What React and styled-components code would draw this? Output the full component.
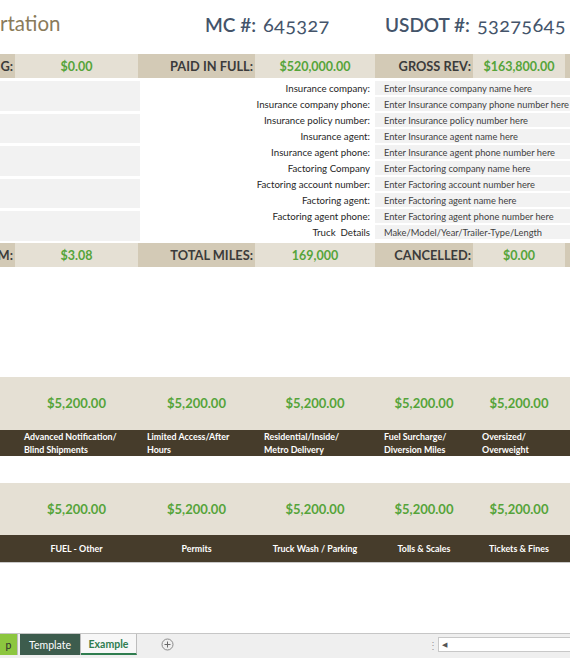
import React from 'react';
import styled, { createGlobalStyle } from 'styled-components';

const GlobalStyle = createGlobalStyle`
  html, body { margin: 0; padding: 0; background: #fff; }
  body { font-family: Lato, "Liberation Sans", sans-serif; }
`;

const COLS = '15px 123px 117px 120px 98px 92px 5px';

const Page = styled.div`
  width: 570px;
  height: 658px;
  overflow: hidden;
  display: flex;
  flex-direction: column;
`;

const Header = styled.div`
  height: 54px;
  display: grid;
  grid-template-columns: 205px 180px 1fr;
  align-items: center;
`;

const Title = styled.span`
  font-size: 20.5px;
  color: #8a7b5a;
  padding-bottom: 8px;
`;

const Ident = styled.span`
  display: flex;
  align-items: baseline;
  gap: 7px;
  color: #44546a;
  font-size: 19px;
  padding-bottom: 6px;
`;

const IdentLabel = styled.span`
  font-weight: 600;
`;

const IdentNum = styled.span`
  font-size: 20px;
  font-feature-settings: "onum";
  letter-spacing: 0.3px;
`;

const SumRow = styled.div`
  height: 24px;
  display: grid;
  grid-template-columns: ${COLS};
`;

const SumLabel = styled.div`
  background: #d3cab6;
  color: #3b3b3b;
  font-weight: 700;
  font-size: 12.8px;
  display: flex;
  align-items: center;
  justify-content: flex-end;
  padding-right: 2px;
  white-space: nowrap;
  overflow: hidden;
`;

const SumValue = styled.div`
  background: #e5e0d4;
  color: #55a43a;
  font-weight: 700;
  font-size: 12.5px;
  display: flex;
  align-items: center;
  justify-content: center;
`;

const Info = styled.div`
  height: 165px;
  display: grid;
  grid-template-columns: 140px 1fr;
`;

const LeftBoxes = styled.div`
  display: flex;
  flex-direction: column;
  gap: 3px;
  padding: 3px 0 2px;
`;

const GrayBox = styled.div`
  flex: 1;
  background: #f2f2f2;
`;

const Fields = styled.div`
  display: flex;
  flex-direction: column;
  padding: 2px 0 3px;
`;

const Field = styled.div`
  height: 16px;
  display: grid;
  grid-template-columns: 230px 195px;
  column-gap: 5px;
  align-items: stretch;
`;

const FieldLabel = styled.div`
  color: #262626;
  font-size: 9.7px;
  display: flex;
  align-items: center;
  justify-content: flex-end;
  white-space: pre;
`;

const FieldValue = styled.div`
  background: #f2f2f2;
  color: #3f3f3f;
  font-size: 9.3px;
  margin: 1px 0;
  padding-left: 9px;
  display: flex;
  align-items: center;
  white-space: nowrap;
`;

const Section = styled.div`
  margin-top: ${p => p.gap}px;
  display: flex;
  flex-direction: column;
  border-bottom: ${p => (p.line ? '1px solid #c9c9c9' : 'none')};
`;

const Amounts = styled.div`
  height: ${p => p.h}px;
  background: #e5e0d4;
  display: grid;
  grid-template-columns: ${COLS};
`;

const Amount = styled.div`
  color: #55a43a;
  font-weight: 700;
  font-size: 13px;
  display: flex;
  align-items: center;
  justify-content: center;
  padding-bottom: 1px;
`;

const Captions = styled.div`
  height: ${p => p.h}px;
  background: #463c2b;
  display: grid;
  grid-template-columns: ${COLS};
`;

const Caption = styled.div`
  color: #fff;
  font-weight: 700;
  font-size: 8.9px;
  line-height: 13px;
  display: flex;
  align-items: center;
  justify-content: ${p => (p.center ? 'center' : 'flex-start')};
  padding-left: ${p => (p.center ? 0 : 9)}px;
  white-space: pre;
`;

const TabBar = styled.div`
  margin-top: auto;
  height: 24px;
  background: #efefef;
  border-top: 1px solid #c6c6c6;
  display: flex;
  align-items: stretch;
  font-size: 10.5px;
`;

const Tab = styled.div`
  display: flex;
  align-items: center;
  justify-content: center;
  width: ${p => p.w}px;
  margin-right: ${p => p.mr || 0}px;
  background: ${p => p.bg};
  color: ${p => p.fg};
  font-weight: ${p => (p.active ? 700 : 400)};
  border-bottom: ${p => (p.active ? '2px solid #2f7d4f' : 'none')};
  border-right: 1px solid #bdbdbd;
  margin-bottom: 3px;
`;

const AddTab = styled.div`
  margin-left: 24px;
  display: flex;
  align-items: center;
  padding-bottom: 3px;
`;

const Dots = styled.div`
  margin-left: auto;
  width: 10px;
  display: flex;
  align-items: center;
  justify-content: center;
  color: #9a9a9a;
  font-size: 10px;
  padding-bottom: 3px;
`;

const Scroll = styled.div`
  width: 128px;
  margin: 3px 0 6px;
  background: #fff;
  border: 1px solid #c8c8c8;
  border-right: none;
  display: flex;
  align-items: center;
  padding-left: 3px;
  font-size: 7px;
  color: #555;
`;

const fields = [
  ['Insurance company:', 'Enter Insurance company name here'],
  ['Insurance company phone:', 'Enter Insurance company phone number here'],
  ['Insurance policy number:', 'Enter Insurance policy number here'],
  ['Insurance agent:', 'Enter Insurance agent name here'],
  ['Insurance agent phone:', 'Enter Insurance agent phone number here'],
  ['Factoring Company', 'Enter Factoring company name here'],
  ['Factoring account number:', 'Enter Factoring account number here'],
  ['Factoring agent:', 'Enter Factoring agent name here'],
  ['Factoring agent phone:', 'Enter Factoring agent phone number here'],
  ['Truck  Details', 'Make/Model/Year/Trailer-Type/Length'],
];

const feesTop = [
  'Advanced Notification/\nBlind Shipments',
  'Limited Access/After\nHours',
  'Residential/Inside/\nMetro Delivery',
  'Fuel Surcharge/\nDiversion Miles',
  'Oversized/\nOverweight',
];

const feesBottom = ['FUEL - Other', 'Permits', 'Truck Wash / Parking', 'Tolls & Scales', 'Tickets & Fines'];

const Summary = ({ items }) => (
  <SumRow>
    {items.map(([label, value], i) => (
      <React.Fragment key={i}>
        <SumLabel>{label}</SumLabel>
        {value !== undefined && <SumValue>{value}</SumValue>}
      </React.Fragment>
    ))}
  </SumRow>
);

const FeeBlock = ({ labels, center, gap, line, h1, h2 }) => (
  <Section gap={gap} line={line}>
    <Amounts h={h1}>
      <div />
      {labels.map((_, i) => (
        <Amount key={i}>$5,200.00</Amount>
      ))}
    </Amounts>
    <Captions h={h2}>
      <div />
      {labels.map((l, i) => (
        <Caption key={i} center={center}>{l}</Caption>
      ))}
    </Captions>
  </Section>
);

export default function App() {
  return (
    <Page>
      <GlobalStyle />
      <Header>
        <Title>rtation</Title>
        <Ident>
          <IdentLabel>MC #:</IdentLabel>
          <IdentNum>645327</IdentNum>
        </Ident>
        <Ident>
          <IdentLabel>USDOT #:</IdentLabel>
          <IdentNum>53275645</IdentNum>
        </Ident>
      </Header>

      <Summary items={[['IG:', '$0.00'], ['PAID IN FULL:', '$520,000.00'], ['GROSS REV:', '$163,800.00'], ['']]} />

      <Info>
        <LeftBoxes>
          {[0, 1, 2, 3, 4].map(i => (
            <GrayBox key={i} />
          ))}
        </LeftBoxes>
        <Fields>
          {fields.map(([l, v]) => (
            <Field key={l}>
              <FieldLabel>{l}</FieldLabel>
              <FieldValue>{v}</FieldValue>
            </Field>
          ))}
        </Fields>
      </Info>

      <Summary items={[['M:', '$3.08'], ['TOTAL MILES:', '169,000'], ['CANCELLED:', '$0.00'], ['']]} />

      <FeeBlock labels={feesTop} gap={110} h1={53} h2={26} />
      <FeeBlock labels={feesBottom} center gap={27} h1={52} h2={27} line />

      <TabBar>
        <Tab w={17} mr={2} bg="#8cc63f" fg="#2d2d2d">p</Tab>
        <Tab w={60} bg="#3d5c4d" fg="#fff">Template</Tab>
        <Tab w={55} bg="#f7f7f7" fg="#2f7d4f" active>Example</Tab>
        <AddTab>
          <svg width="13" height="13" viewBox="0 0 13 13">
            <circle cx="6.5" cy="6.5" r="5.5" fill="none" stroke="#8a8a8a" strokeWidth="1" />
            <path d="M6.5 3.5v6M3.5 6.5h6" stroke="#6a6a6a" strokeWidth="1" />
          </svg>
        </AddTab>
        <Dots>⋮</Dots>
        <Scroll>◀</Scroll>
      </TabBar>
    </Page>
  );
}
